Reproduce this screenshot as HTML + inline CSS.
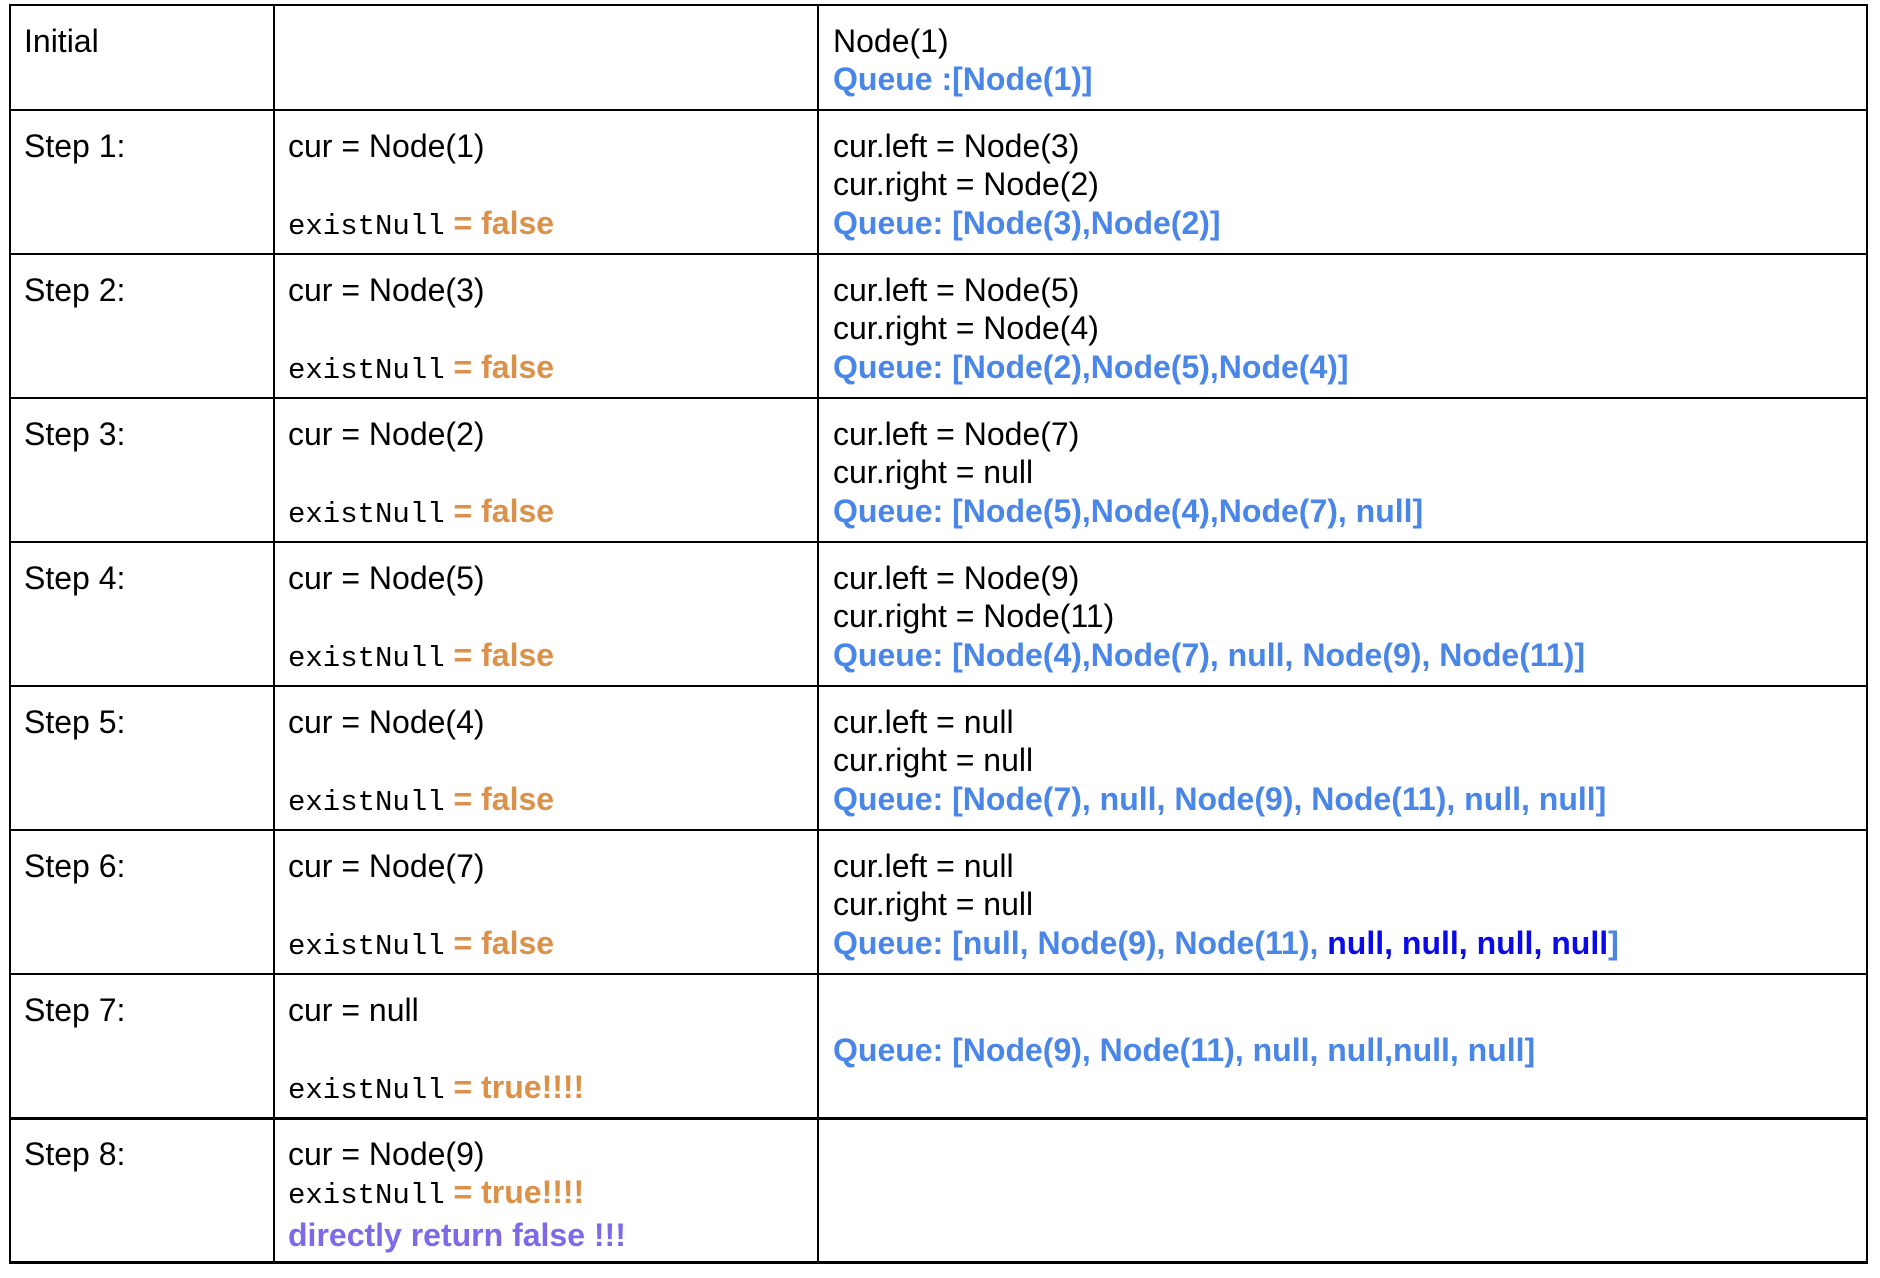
<!DOCTYPE html>
<html><head><meta charset="utf-8"><style>
body{margin:0;width:1880px;height:1278px;background:#fff;position:relative;overflow:hidden;font-family:"Liberation Sans",Arial,sans-serif;font-size:32px;color:#000}
.h{position:absolute;left:9px;width:1859px;height:2px;background:#000}
.v{position:absolute;top:5px;height:1259px;width:2px;background:#000}
.c{position:absolute;line-height:38.4px;white-space:pre}
.m{font-family:"Liberation Mono",monospace;font-size:29px}
.o{color:#dc9148;font-weight:bold}
.b{color:#4a86e8;font-weight:bold}
.d{color:#0a0ae8;font-weight:bold}
.p{color:#7e6ae8;font-weight:bold}
</style></head><body>
<div class="h" style="top:4px"></div>
<div class="h" style="top:109px"></div>
<div class="h" style="top:253px"></div>
<div class="h" style="top:397px"></div>
<div class="h" style="top:541px"></div>
<div class="h" style="top:685px"></div>
<div class="h" style="top:829px"></div>
<div class="h" style="top:973px"></div>
<div class="h" style="top:1117px;height:3px"></div>
<div class="h" style="top:1261px;height:3px"></div>
<div class="v" style="left:9px"></div>
<div class="v" style="left:273px"></div>
<div class="v" style="left:817px"></div>
<div class="v" style="left:1866px"></div>

<div class="c" style="left:24px;top:22px">Initial</div>
<div class="c" style="left:833px;top:22px">Node(1)
<span class="b">Queue :[Node(1)]</span></div>

<div class="c" style="left:24px;top:127px">Step 1:</div>
<div class="c" style="left:288px;top:127px">cur = Node(1)

<span class="m">existNull</span><span class="o"> = false</span></div>
<div class="c" style="left:833px;top:127px">cur.left = Node(3)
cur.right = Node(2)
<span class="b">Queue: [Node(3),Node(2)]</span></div>

<div class="c" style="left:24px;top:271px">Step 2:</div>
<div class="c" style="left:288px;top:271px">cur = Node(3)

<span class="m">existNull</span><span class="o"> = false</span></div>
<div class="c" style="left:833px;top:271px">cur.left = Node(5)
cur.right = Node(4)
<span class="b">Queue: [Node(2),Node(5),Node(4)]</span></div>

<div class="c" style="left:24px;top:415px">Step 3:</div>
<div class="c" style="left:288px;top:415px">cur = Node(2)

<span class="m">existNull</span><span class="o"> = false</span></div>
<div class="c" style="left:833px;top:415px">cur.left = Node(7)
cur.right = null
<span class="b">Queue: [Node(5),Node(4),Node(7), null]</span></div>

<div class="c" style="left:24px;top:559px">Step 4:</div>
<div class="c" style="left:288px;top:559px">cur = Node(5)

<span class="m">existNull</span><span class="o"> = false</span></div>
<div class="c" style="left:833px;top:559px">cur.left = Node(9)
cur.right = Node(11)
<span class="b">Queue: [Node(4),Node(7), null, Node(9), Node(11)]</span></div>

<div class="c" style="left:24px;top:703px">Step 5:</div>
<div class="c" style="left:288px;top:703px">cur = Node(4)

<span class="m">existNull</span><span class="o"> = false</span></div>
<div class="c" style="left:833px;top:703px">cur.left = null
cur.right = null
<span class="b">Queue: [Node(7), null, Node(9), Node(11), null, null]</span></div>

<div class="c" style="left:24px;top:847px">Step 6:</div>
<div class="c" style="left:288px;top:847px">cur = Node(7)

<span class="m">existNull</span><span class="o"> = false</span></div>
<div class="c" style="left:833px;top:847px">cur.left = null
cur.right = null
<span class="b">Queue: [null, Node(9), Node(11), </span><span class="d">null, null, null, null</span><span class="b">]</span></div>

<div class="c" style="left:24px;top:991px">Step 7:</div>
<div class="c" style="left:288px;top:991px">cur = null

<span class="m">existNull</span><span class="o"> = true!!!!</span></div>
<div class="c" style="left:833px;top:1031px"><span class="b">Queue: [Node(9), Node(11), null, null,null, null]</span></div>

<div class="c" style="left:24px;top:1135px">Step 8:</div>
<div class="c" style="left:288px;top:1135px">cur = Node(9)
<span class="m">existNull</span><span class="o"> = true!!!!</span>
<span class="p">directly return false !!!</span></div>
</body></html>
